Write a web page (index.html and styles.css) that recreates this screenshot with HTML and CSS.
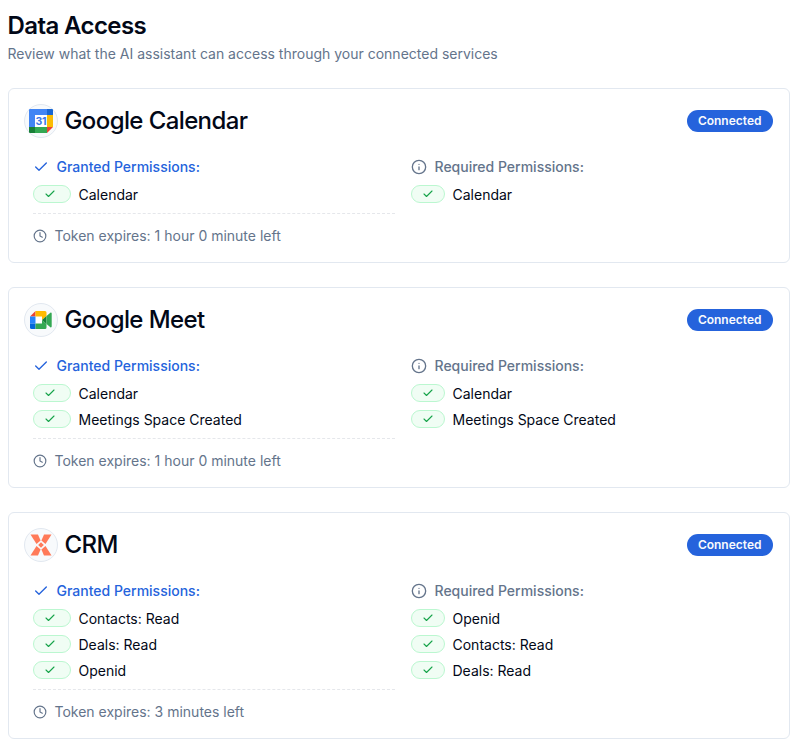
FILE: index.html
```html
<!DOCTYPE html>
<html lang="en">
<head>
  <meta charset="UTF-8" />
  <meta name="viewport" content="width=device-width, initial-scale=1.0" />
  <title>Data Access</title>
  <link rel="stylesheet" href="styles.css">
</head>
<body>
  <!-- Shared icons -->
  <svg class="sprite" width="0" height="0">
    <symbol id="check" viewBox="0 0 24 24"><path d="M20 6 9 17l-5-5" /></symbol>
    <symbol id="info" viewBox="0 0 24 24"><circle cx="12" cy="12" r="10" /><path d="M12 16v-4M12 8h.01" /></symbol>
    <symbol id="clock" viewBox="0 0 24 24"><circle cx="12" cy="12" r="10" /><path d="M12 6v6l4 2" /></symbol>
  </svg>

  <header class="page-header">
    <h1>Data Access</h1>
    <p>Review what the AI assistant can access through your connected services</p>
  </header>

  <main class="services">
    <!-- Google Calendar -->
    <section class="card">
      <div class="card-header">
        <div class="logo">
          <svg width="24" height="24" viewBox="0 0 24 24">
            <path fill="#4285f4" d="M1 0h17v6H6v12H0V1a1 1 0 0 1 1-1z" />
            <path fill="#1967d2" d="M18 0h5a1 1 0 0 1 1 1v5h-6z" />
            <path fill="#fbbc04" d="M18 6h6v12h-6z" />
            <path fill="#34a853" d="M6 18h12v6H6z" />
            <path fill="#188038" d="M0 18h6v6H1a1 1 0 0 1-1-1z" />
            <path fill="#ea4335" d="M18 18h6l-6 6z" />
            <path fill="#fff" d="M6 6h12v12H6z" />
            <text class="logo-day" x="11.8" y="15.8">31</text>
          </svg>
        </div>
        <h2>Google Calendar</h2>
        <span class="badge">Connected</span>
      </div>
      <div class="columns">
        <div class="column">
          <div class="label granted"><svg class="icon"><use href="#check" /></svg>Granted Permissions:</div>
          <ul>
            <li><span class="pill"><svg><use href="#check" /></svg></span>Calendar</li>
          </ul>
          <div class="expires"><svg class="icon"><use href="#clock" /></svg>Token expires: 1 hour 0 minute left</div>
        </div>
        <div class="column">
          <div class="label required"><svg class="icon"><use href="#info" /></svg>Required Permissions:</div>
          <ul>
            <li><span class="pill small"><svg><use href="#check" /></svg></span>Calendar</li>
          </ul>
        </div>
      </div>
    </section>

    <!-- Google Meet -->
    <section class="card">
      <div class="card-header">
        <div class="logo">
          <svg width="24" height="24" viewBox="0 0 24 24">
            <path fill="#fff" d="M6 8h8v8H6z" />
            <path fill="#ea4335" d="M1 8.500 6.500 3v5.500z" />
            <path fill="#2684fc" d="M1 8.500h5.500v7H1z" />
            <path fill="#0066da" d="M1 15.500h5.500V21h-4A1.500 1.500 0 0 1 1 19.500z" />
            <path fill="#ffba00" d="M6.500 3H16a1.500 1.500 0 0 1 1.500 1.500V8L13 12V8.500H6.500z" />
            <path fill="#34a853" d="M6.500 15.500H13V12l4.500 4v3.500A1.500 1.500 0 0 1 16 21H6.500z" />
            <path fill="#188038" d="M13 12l4.500-4v8z" />
            <path fill="#34a853" d="M17.500 8l3.900-3.200c.6-.5 1.300-.1 1.300.6v13.200c0 .7-.7 1.100-1.300.6L17.500 16z" />
          </svg>
        </div>
        <h2>Google Meet</h2>
        <span class="badge">Connected</span>
      </div>
      <div class="columns">
        <div class="column">
          <div class="label granted"><svg class="icon"><use href="#check" /></svg>Granted Permissions:</div>
          <ul>
            <li><span class="pill"><svg><use href="#check" /></svg></span>Calendar</li>
            <li><span class="pill"><svg><use href="#check" /></svg></span>Meetings Space Created</li>
          </ul>
          <div class="expires"><svg class="icon"><use href="#clock" /></svg>Token expires: 1 hour 0 minute left</div>
        </div>
        <div class="column">
          <div class="label required"><svg class="icon"><use href="#info" /></svg>Required Permissions:</div>
          <ul>
            <li><span class="pill small"><svg><use href="#check" /></svg></span>Calendar</li>
            <li><span class="pill small"><svg><use href="#check" /></svg></span>Meetings Space Created</li>
          </ul>
        </div>
      </div>
    </section>

    <!-- CRM -->
    <section class="card">
      <div class="card-header">
        <div class="logo">
          <svg width="24" height="24" viewBox="0 0 24 24" fill="#ff7a59">
            <path d="M1.500 1.500H9l2.600 6L7.500 11z" />
            <path d="M22.500 1.500H15l-2.600 6 4.100 3.500z" />
            <path d="M1.500 22.500H9l2.600-6L7.500 13z" />
            <path d="M22.500 22.500H15l-2.600-6 4.100-3.500z" />
            <path d="M12 9.200 14.800 12 12 14.800 9.200 12z" />
          </svg>
        </div>
        <h2>CRM</h2>
        <span class="badge">Connected</span>
      </div>
      <div class="columns">
        <div class="column">
          <div class="label granted"><svg class="icon"><use href="#check" /></svg>Granted Permissions:</div>
          <ul>
            <li><span class="pill"><svg><use href="#check" /></svg></span>Contacts: Read</li>
            <li><span class="pill"><svg><use href="#check" /></svg></span>Deals: Read</li>
            <li><span class="pill"><svg><use href="#check" /></svg></span>Openid</li>
          </ul>
          <div class="expires"><svg class="icon"><use href="#clock" /></svg>Token expires: 3 minutes left</div>
        </div>
        <div class="column">
          <div class="label required"><svg class="icon"><use href="#info" /></svg>Required Permissions:</div>
          <ul>
            <li><span class="pill small"><svg><use href="#check" /></svg></span>Openid</li>
            <li><span class="pill small"><svg><use href="#check" /></svg></span>Contacts: Read</li>
            <li><span class="pill small"><svg><use href="#check" /></svg></span>Deals: Read</li>
          </ul>
        </div>
      </div>
    </section>
  </main>
</body>
</html>
```
FILE: styles.css
```css
* {
  box-sizing: border-box;
  margin: 0;
  padding: 0;
}
body {
  padding: 10px 17px 15px 8px;
  font-family: Inter, "Liberation Sans", sans-serif;
  font-size: 14px;
  line-height: 20px;
  color: #020817;
  background: #fff;
}
svg {
  flex: none;
}
.sprite {
  display: block;
}
.icon,
.pill svg {
  fill: none;
  stroke: currentColor;
  stroke-width: 2;
  stroke-linecap: round;
  stroke-linejoin: round;
}
.icon {
  width: 16px;
  height: 16px;
}
.page-header {
  margin: 0 0 24px -0.5px;
}
.page-header h1 {
  font-size: 24px;
  line-height: 32px;
  font-weight: 600;
  letter-spacing: -0.6px;
  margin-bottom: 2px;
}
.page-header p {
  color: #64748b;
}
.services {
  display: flex;
  flex-direction: column;
  gap: 24px;
}
.card {
  border: 1px solid #e2e8f0;
  border-radius: 6px;
  padding: 15px 16px 16px 15px;
}
.card-header {
  display: flex;
  align-items: center;
  gap: 6.5px;
}
.card-header h2 {
  flex: 1;
  font-size: 24px;
  line-height: 32px;
  font-weight: 500;
  letter-spacing: -0.6px;
}
.logo {
  width: 34px;
  height: 34px;
  border: 1px solid #e2e8f0;
  border-radius: 50%;
  background: #f8fafc;
  display: flex;
  align-items: center;
  justify-content: center;
}
.logo-day {
  font-size: 10.5px;
  font-weight: 700;
  letter-spacing: -0.3px;
  fill: #3b78e7;
  text-anchor: middle;
}
.badge {
  height: 22px;
  padding: 0 11.5px 0 10.5px;
  border-radius: 11px;
  background: #2563dc;
  color: #f8fafc;
  font-size: 12px;
  line-height: 22px;
  font-weight: 600;
}
.columns {
  display: grid;
  grid-template-columns: 1fr 1fr;
  gap: 16px;
  margin-top: 19px;
  padding-left: 9px;
}
.label {
  display: flex;
  align-items: center;
  gap: 7.5px;
  font-weight: 500;
  margin-bottom: 8px;
}
.granted {
  color: #2563dc;
}
.required {
  color: #64748b;
}
ul {
  list-style: none;
  display: flex;
  flex-direction: column;
  gap: 6px;
}
li {
  display: flex;
  gap: 7.5px;
}
.pill {
  width: 38px;
  height: 18px;
  padding-left: 10px;
  border: 1px solid #bbf7d0;
  border-radius: 9px;
  background: #f0fdf4;
  color: #16a34a;
  display: flex;
  align-items: center;
}
.pill svg {
  width: 12px;
  height: 12px;
  stroke-width: 2.2;
}
.pill.small {
  width: 34px;
}
.expires {
  display: flex;
  align-items: center;
  gap: 7.5px;
  margin-top: 8px;
  padding-top: 12px;
  border-top: 1px dashed #e5e7eb;
  color: #64748b;
}
.expires .icon {
  width: 14px;
  height: 14px;
}
```
